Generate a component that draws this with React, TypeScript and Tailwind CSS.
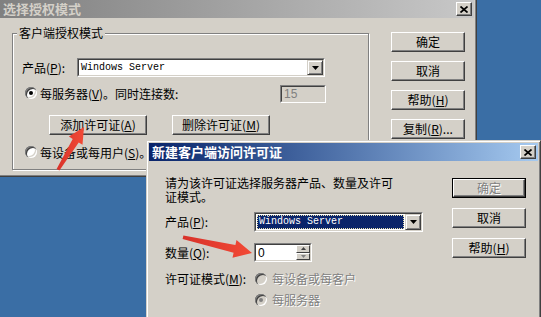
import React from "react";

const cjk = "font-['SimSun','Noto_Sans_CJK_SC',sans-serif]";

function Btn({
  children,
  disabled = false,
  isDefault = false,
  w = "w-[74px]",
}: {
  children: React.ReactNode;
  disabled?: boolean;
  isDefault?: boolean;
  w?: string;
}) {
  const face = (
    <div
      className={`flex items-center justify-center ${isDefault ? "h-[18px] w-full" : `h-[20px] ${w}`} bg-[#d4d0c8] border border-t-white border-l-white border-r-[#404040] border-b-[#404040] shadow-[inset_-1px_-1px_0_#808080] text-[12px] leading-[14px] ${
        disabled ? "text-[#808080] [text-shadow:1px_1px_0_#fff]" : "text-black"
      }`}
    >
      {children}
    </div>
  );
  if (isDefault) {
    return <div className={`h-[20px] ${w} border border-black`}>{face}</div>;
  }
  return face;
}

function Radio({ checked = false, disabled = false }: { checked?: boolean; disabled?: boolean }) {
  return (
    <span
      className={`relative inline-block shrink-0 w-[12px] h-[12px] rounded-full ${
        disabled ? "bg-[#d4d0c8]" : "bg-white"
      } shadow-[inset_1px_1px_0_#808080,inset_2px_2px_0_#404040,inset_-1px_-1px_0_#fff,inset_-2px_-2px_0_#d4d0c8]`}
    >
      {checked && (
        <span
          className={`absolute left-[4px] top-[4px] w-[4px] h-[4px] rounded-full ${
            disabled ? "bg-[#808080]" : "bg-black"
          }`}
        />
      )}
    </span>
  );
}

function Sunken({ className, children }: { className: string; children?: React.ReactNode }) {
  return (
    <div
      className={`border border-t-[#808080] border-l-[#808080] border-r-white border-b-white ${className}`}
    >
      <div className="w-full h-full border border-t-[#404040] border-l-[#404040] border-r-[#d4d0c8] border-b-[#d4d0c8] flex">
        {children}
      </div>
    </div>
  );
}

function DropBtn() {
  return (
    <div className="ml-auto w-[16px] h-full flex items-center justify-center bg-[#d4d0c8] border border-t-[#d4d0c8] border-l-[#d4d0c8] border-r-[#404040] border-b-[#404040] shadow-[inset_1px_1px_0_#fff,inset_-1px_-1px_0_#808080]">
      <svg width="7" height="4" viewBox="0 0 7 4">
        <path d="M0 0h7L3.5 4z" fill="#000" />
      </svg>
    </div>
  );
}

function CloseBtn() {
  return (
    <div className="w-[16px] h-[14px] flex items-center justify-center bg-[#d4d0c8] border border-t-white border-l-white border-r-[#404040] border-b-[#404040] shadow-[inset_-1px_-1px_0_#808080]">
      <svg width="8" height="7" viewBox="0 0 8 7">
        <path d="M0.5 0.5L7.5 6.5M7.5 0.5L0.5 6.5" stroke="#000" strokeWidth="1.7" />
      </svg>
    </div>
  );
}

const U = ({ c }: { c: string }) => <span className="underline underline-offset-1">{c}</span>;

export default function App() {
  return (
    <div className={`relative w-[541px] h-[317px] overflow-hidden bg-[#3a6ea5] ${cjk} text-[12px] leading-[14px]`}>
      {/* back window */}
      <div className="absolute left-[-3px] top-[-3px] w-[480px] h-[180px] flex flex-col bg-[#d4d0c8] border border-t-[#d4d0c8] border-l-[#d4d0c8] border-r-[#404040] border-b-[#404040] shadow-[inset_1px_1px_0_#fff,inset_-1px_-1px_0_#808080] p-[2px]">
        <div className="h-[18px] flex items-center pl-[3px] pr-[2px] bg-gradient-to-r from-[#808080] to-[#c8c8c8]">
          <span className="text-[13px] font-bold text-[#d4d0c8]">选择授权模式</span>
          <div className="ml-auto">
            <CloseBtn />
          </div>
        </div>
        <div className="flex items-start pl-[12px] pt-[14px]">
          <div className="relative mt-[1px] w-[357px] h-[137px] border border-[#808080] shadow-[inset_1px_1px_0_#fff,1px_1px_0_#fff]">
            <span className="absolute left-[4px] top-[-8px] px-[2px] bg-[#d4d0c8] text-[12px]">客户端授权模式</span>
            <div className="flex items-center mt-[24px] h-[19px]">
              <span className="pl-[9px] w-[64px]">
                产品(<U c="P" />):
              </span>
              <Sunken className="w-[248px] h-[19px] bg-white">
                <span className="pl-[2px] self-center font-['Liberation_Mono',monospace] text-[10px] leading-[12px] text-black">
                  Windows Server
                </span>
                <DropBtn />
              </Sunken>
            </div>
            <div className="flex items-center mt-[8px] h-[18px]">
              <span className="ml-[12px]">
                <Radio checked />
              </span>
              <span className="ml-[3px]">
                每服务器(<U c="V" />)。同时连接数:
              </span>
              <Sunken className="ml-auto mr-[42px] w-[46px] h-[18px] bg-[#d4d0c8]">
                <span className="pl-[2px] self-center text-[#808080] font-['Liberation_Sans',sans-serif] text-[12px]">15</span>
              </Sunken>
            </div>
            <div className="flex mt-[12px] gap-[25px] pl-[36px]">
              <Btn w="w-[98px]">
                添加许可证(<U c="A" />)
              </Btn>
              <Btn w="w-[98px]">
                删除许可证(<U c="M" />)
              </Btn>
            </div>
            <div className="flex items-center mt-[11px] h-[14px]">
              <span className="ml-[12px]">
                <Radio />
              </span>
              <span className="ml-[3px]">
                每设备或每用户(<U c="S" />)。
              </span>
            </div>
          </div>
          <div className="ml-[22px] flex flex-col gap-[9px]">
            <Btn>确定</Btn>
            <Btn>取消</Btn>
            <Btn>
              帮助(<U c="H" />)
            </Btn>
            <Btn>
              复制(<U c="R" />)...
            </Btn>
          </div>
        </div>
      </div>

      {/* front dialog */}
      <div className="absolute left-[146px] top-[140px] w-[395px] h-[180px] flex flex-col bg-[#d4d0c8] border border-t-[#d4d0c8] border-l-[#d4d0c8] border-r-[#404040] border-b-[#404040] shadow-[inset_1px_1px_0_#fff,inset_-1px_-1px_0_#808080] p-[2px]">
        <div className="h-[18px] flex items-center pl-[3px] pr-[2px] bg-gradient-to-r from-[#0a246a] to-[#a6caf0]">
          <span className="text-[13px] font-bold text-white">新建客户端访问许可证</span>
          <div className="ml-auto">
            <CloseBtn />
          </div>
        </div>
        <div className="flex items-start pl-[16px] pt-[15px] pr-[12px]">
          <div className="flex-1 flex flex-col">
            <p className="leading-[14px]">
              请为该许可证选择服务器产品、数量及许可
              <br />
              证模式。
            </p>
            <div className="flex items-center mt-[8px] h-[20px]">
              <span className="w-[89px]">
                产品(<U c="P" />):
              </span>
              <Sunken className="w-[169px] h-[20px] bg-white">
                <span className="m-[1px] flex-1 flex items-center pl-[1px] bg-[#0a246a] border border-dotted border-[#e8e0b0] font-['Liberation_Mono',monospace] text-[10px] leading-[12px] text-white">
                  Windows Server
                </span>
                <DropBtn />
              </Sunken>
            </div>
            <div className="flex items-center mt-[11px] h-[19px]">
              <span className="w-[89px]">
                数量(<U c="Q" />):
              </span>
              <Sunken className="w-[58px] h-[19px] bg-white">
                <span className="pl-[2px] self-center font-['Liberation_Sans',sans-serif] text-[12px] text-black">0</span>
                <div className="ml-auto w-[14px] h-full flex flex-col">
                  <div className="flex-1 flex items-center justify-center bg-[#d4d0c8] border border-t-white border-l-white border-r-[#404040] border-b-[#404040]">
                    <svg width="5" height="3" viewBox="0 0 5 3">
                      <path d="M2.5 0L5 3H0z" fill="#404040" />
                    </svg>
                  </div>
                  <div className="flex-1 flex items-center justify-center bg-[#d4d0c8] border border-t-white border-l-white border-r-[#404040] border-b-[#404040]">
                    <svg width="5" height="3" viewBox="0 0 5 3">
                      <path d="M0 0h5L2.5 3z" fill="#808080" />
                    </svg>
                  </div>
                </div>
              </Sunken>
            </div>
            <div className="flex items-center mt-[10px] h-[14px]">
              <span className="w-[90px]">
                许可证模式(<U c="M" />):
              </span>
              <Radio disabled />
              <span className="ml-[5px] text-[#808080] [text-shadow:1px_1px_0_#fff]">每设备或每客户</span>
            </div>
            <div className="flex items-center mt-[7px] h-[14px] pl-[90px]">
              <Radio disabled checked />
              <span className="ml-[5px] text-[#808080] [text-shadow:1px_1px_0_#fff]">每服务器</span>
            </div>
          </div>
          <div className="mt-[2px] flex flex-col gap-[10px]">
            <Btn isDefault disabled>
              确定
            </Btn>
            <Btn>取消</Btn>
            <Btn>
              帮助(<U c="H" />)
            </Btn>
          </div>
        </div>
      </div>

      {/* red arrows */}
      <svg className="absolute left-0 top-0 pointer-events-none" width="541" height="317" viewBox="0 0 541 317">
        <defs>
          <linearGradient id="ar" x1="0" y1="0" x2="1" y2="0">
            <stop offset="0" stopColor="#d8322a" />
            <stop offset="1" stopColor="#f24a36" />
          </linearGradient>
        </defs>
        <polygon
          points="84,127 82.5,144.8 78.7,142.5 59.4,170.5 56.6,169 72.7,138.9 68.9,136.6"
          fill="url(#ar)"
        />
        <polygon
          points="252,253 232.5,257.7 233.6,252.8 182.6,239 183.4,235.5 235.4,245 236.5,240.1"
          fill="url(#ar)"
        />
      </svg>
    </div>
  );
}
